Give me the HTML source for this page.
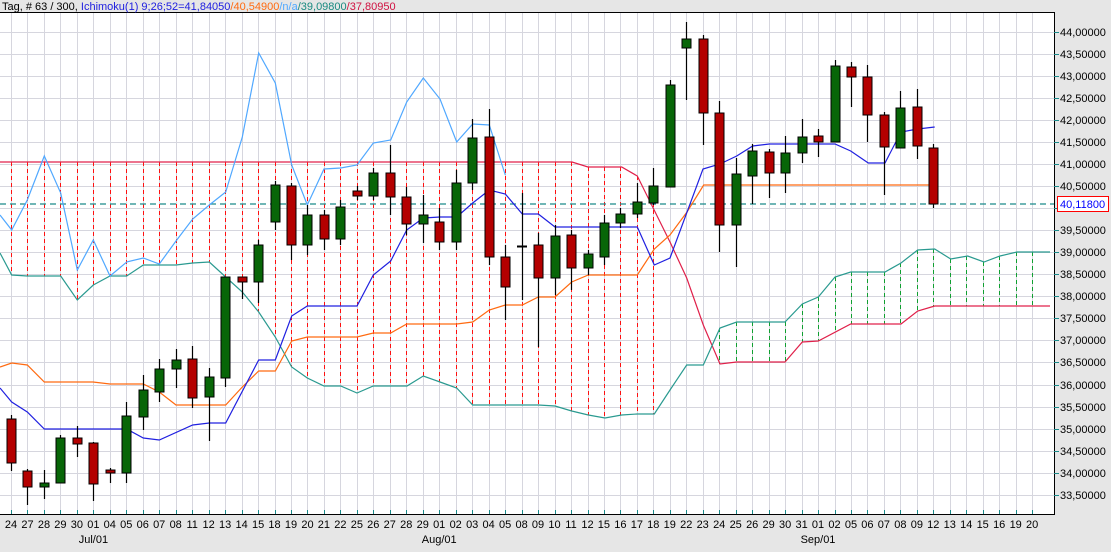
<!DOCTYPE html>
<html><head><meta charset="utf-8"><style>
html,body{margin:0;padding:0;width:1111px;height:552px;overflow:hidden;background:#e6e6e6;font-family:"Liberation Sans",Arial,sans-serif}
svg{display:block}
text{font-family:"Liberation Sans",Arial,sans-serif;font-size:11px}
</style></head><body>
<svg width="1111" height="552" viewBox="0 0 1111 552" xmlns="http://www.w3.org/2000/svg">
<rect x="0" y="0" width="1111" height="552" fill="#e6e6e6"/>
<rect x="0" y="12" width="1054" height="502" fill="#ffffff"/>
<!-- grid -->
<g stroke="#d6d6de" stroke-width="1">
<path d="M0 32.5H1054M0 54.5H1054M0 76.5H1054M0 98.5H1054M0 120.5H1054M0 142.5H1054M0 164.5H1054M0 186.5H1054M0 208.5H1054M0 230.5H1054M0 252.5H1054M0 274.5H1054M0 296.5H1054M0 318.5H1054M0 340.5H1054M0 362.5H1054M0 385.5H1054M0 407.5H1054M0 429.5H1054M0 451.5H1054M0 473.5H1054M0 495.5H1054"/>
<path d="M11.5 12V514M27.5 12V514M44.5 12V514M60.5 12V514M77.5 12V514M93.5 12V514M110.5 12V514M126.5 12V514M143.5 12V514M159.5 12V514M176.5 12V514M192.5 12V514M209.5 12V514M225.5 12V514M242.5 12V514M258.5 12V514M275.5 12V514M291.5 12V514M307.5 12V514M324.5 12V514M340.5 12V514M357.5 12V514M373.5 12V514M390.5 12V514M406.5 12V514M423.5 12V514M439.5 12V514M456.5 12V514M472.5 12V514M489.5 12V514M505.5 12V514M522.5 12V514M538.5 12V514M555.5 12V514M571.5 12V514M588.5 12V514M604.5 12V514M620.5 12V514M637.5 12V514M653.5 12V514M670.5 12V514M686.5 12V514M703.5 12V514M719.5 12V514M736.5 12V514M752.5 12V514M769.5 12V514M785.5 12V514M802.5 12V514M818.5 12V514M835.5 12V514M851.5 12V514M867.5 12V514M884.5 12V514M900.5 12V514M917.5 12V514M933.5 12V514M950.5 12V514M966.5 12V514M983.5 12V514M999.5 12V514M1016.5 12V514M1032.5 12V514"/>
</g>
<!-- red cloud dashes -->
<g stroke="#ff1010" stroke-width="1" stroke-dasharray="4,3">
<path d="M11.5 162V275M27.5 162V276M44.5 162V276M60.5 162V276M77.5 162V300M93.5 162V285M110.5 162V276M126.5 162V276M143.5 162V265M159.5 162V265M176.5 162V265M192.5 162V263M209.5 162V262M225.5 162V277M242.5 162V292M258.5 162V312M275.5 162V337M291.5 162V367M307.5 162V378M324.5 162V386M340.5 162V386M357.5 162V393M373.5 162V386M390.5 162V386M406.5 162V386M423.5 162V376M439.5 162V382M456.5 162V388M472.5 162V405M489.5 162V405M505.5 162V405M522.5 162V405M538.5 162V405M555.5 162V406M571.5 162V411M588.5 167V415M604.5 167V418M620.5 167V415M637.5 176V414M653.5 203V414"/>
</g>
<!-- green cloud dashes -->
<g stroke="#10a030" stroke-width="1" stroke-dasharray="4,3">
<path d="M719.5 328V364M736.5 322V362M752.5 322V362M769.5 322V362M785.5 322V362M802.5 304V342M818.5 297V341M835.5 277V333M851.5 272V324M867.5 272V324M884.5 272V324M900.5 263V324M917.5 250V311M933.5 249V306M950.5 259V306M966.5 256V306M983.5 262V306M999.5 256V306M1016.5 252V306M1032.5 252V306"/>
</g>
<!-- last price dashed -->
<path d="M0 204H1054" stroke="#1a8a8a" stroke-width="1.2" stroke-dasharray="6,4"/>
<!-- Senkou B -->
<polyline fill="none" stroke="#e0204a" stroke-width="1.2" points="0,162 572,162 588,167 621.7,167 637.3,176 670,242 686.7,278 703.3,325 720,364 736.7,362 785,362 802.3,342 818.3,341 850.7,324 901,324 917.7,311 934.7,306 1050,306"/>
<!-- Senkou A -->
<polyline fill="none" stroke="#2a9a90" stroke-width="1.2" points="0,253 11.7,275 27.3,276 60.7,276 77.3,300 93.3,285 110,276 126.7,276 143.3,265 176,265 192.7,263 209.3,262 225.7,277 242.3,292 258.7,312 275.3,337 291.7,367 307.3,378 324,386 340.7,386 357,393 373.3,386 407,386 423.3,376 440,382 456.7,388 472.7,405 538.3,405 555,406 571.7,411 588.3,415 605,418 621.7,415 637.3,414 654.3,414 670,390 686.7,365 703.3,365 720,328 736.7,322 785,322 802.3,304 818.3,297 835,277 850.7,272 885,272 901,263 917.7,250 934.7,249 950.7,259 967.7,256 984,262 1000,256 1017,252 1050,252"/>
<!-- Chikou -->
<polyline fill="none" stroke="#50a8ff" stroke-width="1.2" points="0,215 11.7,230 27.3,200 44.3,156 60.7,193 77.3,270 93.3,240 110,276 126.7,262 143.3,258 159.3,264 176,241 192.7,219 209.3,205 225.7,192 242.3,137 258.7,53 275.3,83 291.7,165 307.3,205 324,169 340.7,168 357,165 373.3,143 390.7,140 406.7,102 423.3,78 440,99 456.7,142 472.7,124 489.3,125 505.3,175"/>
<!-- Kijun -->
<polyline fill="none" stroke="#ff6a10" stroke-width="1.2" points="0,367 11.7,363 27.3,365 44.3,382 93,382 110,384 143.3,384 159.3,392 176,405 225.7,405 242.3,387 258.7,371 275.3,371 291.7,341 307.3,337 357,337 373.3,333 390.7,333 406.7,324 456.7,324 472.7,322 489.3,310 505.3,305 522.3,305 538.3,297 555,297 571.7,282 588.3,275 637.3,275 654.3,249 670,235 687,212 703.7,185 934.7,185"/>
<!-- Tenkan -->
<polyline fill="none" stroke="#2020e0" stroke-width="1.2" points="0,388 11.7,402 27.3,412 44.3,429 126.7,429 143.3,438 159.3,440 192.7,425 209.3,423 225.7,423 258.7,360 275.3,360 291.7,316 307.3,306 357,306 373.3,275 390.7,261 406.7,230 423.3,218 440,217 456.7,217 472.7,203 489.3,190 505.3,194 522.3,214 538.3,214 555,227 637.3,227 654.3,265 670,258 703,169 720,164 736.7,156 752.7,146 769.3,144 835,144 850.7,151 868.3,163 885,163 901,132 917.7,129 934.7,127"/>
<!-- wicks -->
<g stroke="#000" stroke-width="1.2">
<path d="M11.5 415V471M27.5 469V505M44.5 470V499M60.5 435V483M77.5 426V457M93.5 442V501M110.5 468V483M126.5 402V483M143.5 375V430M159.5 359V402M176.5 349V388M192.5 346V408M209.5 368V441M225.5 277V387M242.5 277V299M258.5 240V303M275.5 181V230M291.5 183V260M307.5 205V255M324.5 210V250M340.5 200V245M357.5 186V200M373.5 168V200M390.5 145V215M406.5 187V235M423.5 195V243M439.5 208V250M456.5 170V250M472.5 119V190M489.5 109V265M505.5 245V320M522.5 193V300M538.5 233V347M555.5 225V295M571.5 230V290M588.5 250V275M604.5 215V265M620.5 208V228M637.5 183V218M653.5 168V205M670.5 80V187M686.5 22V100M703.5 35V145M719.5 101V252M736.5 158V267M752.5 144V204M769.5 149V198M785.5 136V193M802.5 119V163M818.5 129V157M835.5 60V142M851.5 62V107M867.5 65V142M884.5 112V195M900.5 91V148M917.5 89V159M933.5 144V208"/>
</g>
<!-- green bodies -->
<g fill="#086608" stroke="#000" stroke-width="1">
<rect x="40" y="483" width="9" height="4"/>
<rect x="56" y="438" width="9" height="45"/>
<rect x="122" y="416" width="9" height="57"/>
<rect x="139" y="390" width="9" height="27"/>
<rect x="155" y="369" width="9" height="23"/>
<rect x="172" y="360" width="9" height="9"/>
<rect x="205" y="377" width="9" height="20"/>
<rect x="221" y="277" width="9" height="101"/>
<rect x="254" y="245" width="9" height="37"/>
<rect x="271" y="185" width="9" height="37"/>
<rect x="303" y="215" width="9" height="30"/>
<rect x="336" y="207" width="9" height="32"/>
<rect x="369" y="173" width="9" height="23"/>
<rect x="419" y="215" width="9" height="9"/>
<rect x="452" y="183" width="9" height="59"/>
<rect x="468" y="138" width="9" height="45"/>
<rect x="551" y="236" width="9" height="42"/>
<rect x="584" y="254" width="9" height="14"/>
<rect x="600" y="223" width="9" height="34"/>
<rect x="616" y="214" width="9" height="9"/>
<rect x="633" y="202" width="9" height="12"/>
<rect x="649" y="186" width="9" height="17"/>
<rect x="666" y="85" width="9" height="102"/>
<rect x="682" y="39" width="9" height="9"/>
<rect x="732" y="174" width="9" height="51"/>
<rect x="748" y="151" width="9" height="25"/>
<rect x="781" y="153" width="9" height="20"/>
<rect x="798" y="137" width="9" height="16"/>
<rect x="831" y="66" width="9" height="76"/>
<rect x="896" y="108" width="9" height="40"/>
</g>
<!-- red bodies -->
<g fill="#b40000" stroke="#000" stroke-width="1">
<rect x="7" y="419" width="9" height="44"/>
<rect x="23" y="471" width="9" height="16"/>
<rect x="73" y="438" width="9" height="6"/>
<rect x="89" y="443" width="9" height="41"/>
<rect x="106" y="470" width="9" height="3"/>
<rect x="188" y="359" width="9" height="39"/>
<rect x="238" y="277" width="9" height="5"/>
<rect x="287" y="186" width="9" height="59"/>
<rect x="320" y="215" width="9" height="24"/>
<rect x="353" y="191" width="9" height="5"/>
<rect x="386" y="173" width="9" height="24"/>
<rect x="402" y="197" width="9" height="27"/>
<rect x="435" y="222" width="9" height="20"/>
<rect x="485" y="137" width="9" height="120"/>
<rect x="501" y="257" width="9" height="30"/>
<rect x="534" y="245" width="9" height="33"/>
<rect x="567" y="235" width="9" height="33"/>
<rect x="699" y="39" width="9" height="74"/>
<rect x="715" y="113" width="9" height="112"/>
<rect x="765" y="152" width="9" height="21"/>
<rect x="814" y="136" width="9" height="6"/>
<rect x="847" y="67" width="9" height="10"/>
<rect x="863" y="77" width="9" height="38"/>
<rect x="880" y="115" width="9" height="32"/>
<rect x="913" y="107" width="9" height="39"/>
<rect x="929" y="148" width="9" height="56"/>
</g>
<path d="M517 246.5H527" stroke="#000" stroke-width="2"/>
<!-- frame -->
<rect x="0" y="0" width="1111" height="12" fill="#e6e6e6"/>
<path d="M0 12.5H1054.5V514.5H0" fill="none" stroke="#000" stroke-width="1"/>
<!-- right ticks -->
<g stroke="#1a8a8a" stroke-width="1">
<path d="M1054 32.5H1059M1054 54.5H1059M1054 76.5H1059M1054 98.5H1059M1054 120.5H1059M1054 142.5H1059M1054 164.5H1059M1054 186.5H1059M1054 208.5H1059M1054 230.5H1059M1054 252.5H1059M1054 274.5H1059M1054 296.5H1059M1054 318.5H1059M1054 340.5H1059M1054 362.5H1059M1054 385.5H1059M1054 407.5H1059M1054 429.5H1059M1054 451.5H1059M1054 473.5H1059M1054 495.5H1059"/>
<path d="M11.5 510V514M27.5 510V514M44.5 510V514M60.5 510V514M77.5 510V514M93.5 510V514M110.5 510V514M126.5 510V514M143.5 510V514M159.5 510V514M176.5 510V514M192.5 510V514M209.5 510V514M225.5 510V514M242.5 510V514M258.5 510V514M275.5 510V514M291.5 510V514M307.5 510V514M324.5 510V514M340.5 510V514M357.5 510V514M373.5 510V514M390.5 510V514M406.5 510V514M423.5 510V514M439.5 510V514M456.5 510V514M472.5 510V514M489.5 510V514M505.5 510V514M522.5 510V514M538.5 510V514M555.5 510V514M571.5 510V514M588.5 510V514M604.5 510V514M620.5 510V514M637.5 510V514M653.5 510V514M670.5 510V514M686.5 510V514M703.5 510V514M719.5 510V514M736.5 510V514M752.5 510V514M769.5 510V514M785.5 510V514M802.5 510V514M818.5 510V514M835.5 510V514M851.5 510V514M867.5 510V514M884.5 510V514M900.5 510V514M917.5 510V514M933.5 510V514M950.5 510V514M966.5 510V514M983.5 510V514M999.5 510V514M1016.5 510V514M1032.5 510V514"/>
</g>
<g fill="#000">
<text x="1060" y="36">44,00000</text><text x="1060" y="58">43,50000</text><text x="1060" y="80">43,00000</text><text x="1060" y="102">42,50000</text><text x="1060" y="124">42,00000</text><text x="1060" y="146">41,50000</text><text x="1060" y="168">41,00000</text><text x="1060" y="190">40,50000</text><text x="1060" y="234">39,50000</text><text x="1060" y="256">39,00000</text><text x="1060" y="278">38,50000</text><text x="1060" y="300">38,00000</text><text x="1060" y="322">37,50000</text><text x="1060" y="344">37,00000</text><text x="1060" y="366">36,50000</text><text x="1060" y="389">36,00000</text><text x="1060" y="411">35,50000</text><text x="1060" y="433">35,00000</text><text x="1060" y="455">34,50000</text><text x="1060" y="477">34,00000</text><text x="1060" y="499">33,50000</text>
</g>
<rect x="1057.5" y="196.5" width="51" height="15" fill="#fff" stroke="#ff0000" stroke-width="1"/>
<text x="1060" y="208" fill="#0000ff">40,11800</text>
<g fill="#000" text-anchor="middle">
<text x="11" y="528">24</text><text x="27.5" y="528">27</text><text x="44" y="528">28</text><text x="60.4" y="528">29</text><text x="76.9" y="528">30</text><text x="93.4" y="528">01</text><text x="109.8" y="528">04</text><text x="126.3" y="528">05</text><text x="142.8" y="528">06</text><text x="159.2" y="528">07</text><text x="175.7" y="528">08</text><text x="192.2" y="528">11</text><text x="208.6" y="528">12</text><text x="225.1" y="528">13</text><text x="241.6" y="528">14</text><text x="258.1" y="528">15</text><text x="274.5" y="528">18</text><text x="291" y="528">19</text><text x="307.5" y="528">20</text><text x="323.9" y="528">21</text><text x="340.4" y="528">22</text><text x="356.9" y="528">25</text><text x="373.3" y="528">26</text><text x="389.8" y="528">27</text><text x="406.3" y="528">28</text><text x="422.8" y="528">29</text><text x="439.2" y="528">01</text><text x="455.7" y="528">02</text><text x="472.2" y="528">03</text><text x="488.6" y="528">04</text><text x="505.1" y="528">05</text><text x="521.6" y="528">08</text><text x="538" y="528">09</text><text x="554.5" y="528">10</text><text x="571" y="528">11</text><text x="587.5" y="528">12</text><text x="603.9" y="528">15</text><text x="620.4" y="528">16</text><text x="636.9" y="528">17</text><text x="653.3" y="528">18</text><text x="669.8" y="528">19</text><text x="686.3" y="528">22</text><text x="702.7" y="528">23</text><text x="719.2" y="528">24</text><text x="735.7" y="528">25</text><text x="752.2" y="528">26</text><text x="768.6" y="528">29</text><text x="785.1" y="528">30</text><text x="801.6" y="528">31</text><text x="818" y="528">01</text><text x="834.5" y="528">02</text><text x="851" y="528">05</text><text x="867.4" y="528">06</text><text x="883.9" y="528">07</text><text x="900.4" y="528">08</text><text x="916.9" y="528">09</text><text x="933.3" y="528">12</text><text x="949.8" y="528">13</text><text x="966.3" y="528">14</text><text x="982.7" y="528">15</text><text x="999.2" y="528">16</text><text x="1015.7" y="528">19</text><text x="1032.1" y="528">20</text>
<text x="93.4" y="543">Jul/01</text><text x="439.2" y="543">Aug/01</text><text x="818" y="543">Sep/01</text>
</g>
<text x="2" y="10"><tspan fill="#000">Tag, # 63 / 300, </tspan><tspan fill="#2020e0">Ichimoku(1) 9;26;52=41,84050</tspan><tspan fill="#ff6a10">/40,54900</tspan><tspan fill="#50a8ff">/n/a</tspan><tspan fill="#1a8a80">/39,09800</tspan><tspan fill="#d01040">/37,80950</tspan></text>
</svg>
</body></html>
